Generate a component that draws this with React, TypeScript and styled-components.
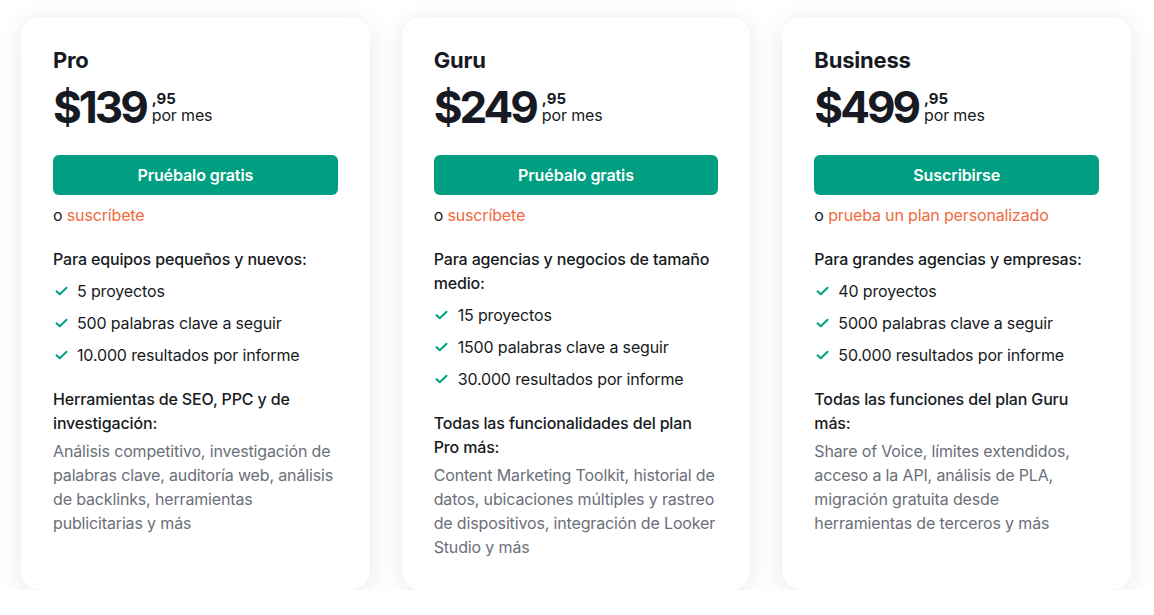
import React from "react";
import styled, { createGlobalStyle } from "styled-components";

const GlobalStyle = createGlobalStyle`
  html, body {
    margin: 0;
    padding: 0;
    background: #ffffff;
    font-family: Inter, "Noto Sans", Arial, sans-serif;
    color: #171a22;
    -webkit-font-smoothing: antialiased;
  }
  * { box-sizing: border-box; }
`;

const Page = styled.div`
  width: 1110px;
  padding-top: 17px;
  margin-left: 21px;
  display: grid;
  grid-template-columns: repeat(3, 1fr);
  gap: 32px;
  align-items: stretch;
`;

const Card = styled.div`
  background: #ffffff;
  border-radius: 20px;
  padding: 31px 32px 31px;
  box-shadow: 0 4px 24px rgba(30, 32, 44, 0.1);
  display: flex;
  flex-direction: column;
  letter-spacing: -0.15px;
`;

const Title = styled.h2`
  margin: 0 0 11px;
  font-size: 22px;
  line-height: 24px;
  font-weight: 700;
  letter-spacing: -0.2px;
  color: #171a22;
`;

const PriceRow = styled.div`
  display: flex;
  align-items: center;
  height: 48px;
`;

const Amount = styled.span`
  font-size: 44px;
  line-height: 48px;
  font-weight: 700;
  letter-spacing: -3px;
  margin-right: 6px;
  color: #171a22;
`;

const PriceMeta = styled.div`
  display: flex;
  flex-direction: column;
  gap: 1px;
`;

const Cents = styled.span`
  font-size: 15px;
  line-height: 15px;
  font-weight: 700;
  letter-spacing: 0;
  color: #171a22;
`;

const Period = styled.span`
  font-size: 16px;
  line-height: 17px;
  font-weight: 400;
  color: #171a22;
`;

const Button = styled.button`
  margin-top: 24px;
  height: 40px;
  width: 100%;
  border: none;
  border-radius: 6px;
  background: #009f81;
  color: #ffffff;
  font-family: inherit;
  font-size: 16px;
  font-weight: 600;
  letter-spacing: -0.1px;
  cursor: pointer;
`;

const AltLine = styled.p`
  margin: 8px 0 0;
  font-size: 16px;
  line-height: 24px;
  color: #171a22;
`;

const AltLink = styled.a`
  color: #ef6a3e;
  text-decoration: none;
`;

const SectionTitle = styled.p`
  margin: 20px 0 0;
  font-size: 16px;
  line-height: 24px;
  font-weight: 500;
  color: #171a22;
`;

const List = styled.ul`
  list-style: none;
  margin: 8px 0 0;
  padding: 0;
  display: flex;
  flex-direction: column;
  gap: 8px;
`;

const Item = styled.li`
  display: flex;
  align-items: center;
  gap: 8px;
  font-size: 16px;
  line-height: 24px;
  color: #171a22;
`;

const CheckBox = styled.span`
  width: 16px;
  height: 24px;
  display: flex;
  align-items: center;
  justify-content: center;
`;

const Description = styled.p`
  margin: 4px 0 0;
  font-size: 16px;
  line-height: 24px;
  color: #6c6e79;
`;

const Check = () => (
  <CheckBox>
    <svg width="13" height="10" viewBox="0 0 13 10" fill="none">
      <path d="M1.5 5.2 L4.8 8.2 L11.5 1.8" stroke="#009f81" strokeWidth="2" strokeLinecap="round" strokeLinejoin="round" />
    </svg>
  </CheckBox>
);

type Plan = {
  name: string;
  price: string;
  cta: string;
  alt: string;
  audience: string;
  features: string[];
  extraTitle: string;
  extra: string;
};

const plans: Plan[] = [
  {
    name: "Pro",
    price: "$139",
    cta: "Pruébalo gratis",
    alt: "suscríbete",
    audience: "Para equipos pequeños y nuevos:",
    features: ["5 proyectos", "500 palabras clave a seguir", "10.000 resultados por informe"],
    extraTitle: "Herramientas de SEO, PPC y de investigación:",
    extra:
      "Análisis competitivo, investigación de palabras clave, auditoría web, análisis de backlinks, herramientas publicitarias y más",
  },
  {
    name: "Guru",
    price: "$249",
    cta: "Pruébalo gratis",
    alt: "suscríbete",
    audience: "Para agencias y negocios de tamaño medio:",
    features: ["15 proyectos", "1500 palabras clave a seguir", "30.000 resultados por informe"],
    extraTitle: "Todas las funcionalidades del plan Pro más:",
    extra:
      "Content Marketing Toolkit, historial de datos, ubicaciones múltiples y rastreo de dispositivos, integración de Looker Studio y más",
  },
  {
    name: "Business",
    price: "$499",
    cta: "Suscribirse",
    alt: "prueba un plan personalizado",
    audience: "Para grandes agencias y empresas:",
    features: ["40 proyectos", "5000 palabras clave a seguir", "50.000 resultados por informe"],
    extraTitle: "Todas las funciones del plan Guru más:",
    extra:
      "Share of Voice, límites extendidos, acceso a la API, análisis de PLA, migración gratuita desde herramientas de terceros y más",
  },
];

export default function App() {
  return (
    <>
      <GlobalStyle />
      <Page>
        {plans.map((p) => (
          <Card key={p.name}>
            <Title>{p.name}</Title>
            <PriceRow>
              <Amount>{p.price}</Amount>
              <PriceMeta>
                <Cents>,95</Cents>
                <Period>por mes</Period>
              </PriceMeta>
            </PriceRow>
            <Button>{p.cta}</Button>
            <AltLine>
              o <AltLink href="#">{p.alt}</AltLink>
            </AltLine>
            <SectionTitle>{p.audience}</SectionTitle>
            <List>
              {p.features.map((f) => (
                <Item key={f}>
                  <Check />
                  {f}
                </Item>
              ))}
            </List>
            <SectionTitle>{p.extraTitle}</SectionTitle>
            <Description>{p.extra}</Description>
          </Card>
        ))}
      </Page>
    </>
  );
}
